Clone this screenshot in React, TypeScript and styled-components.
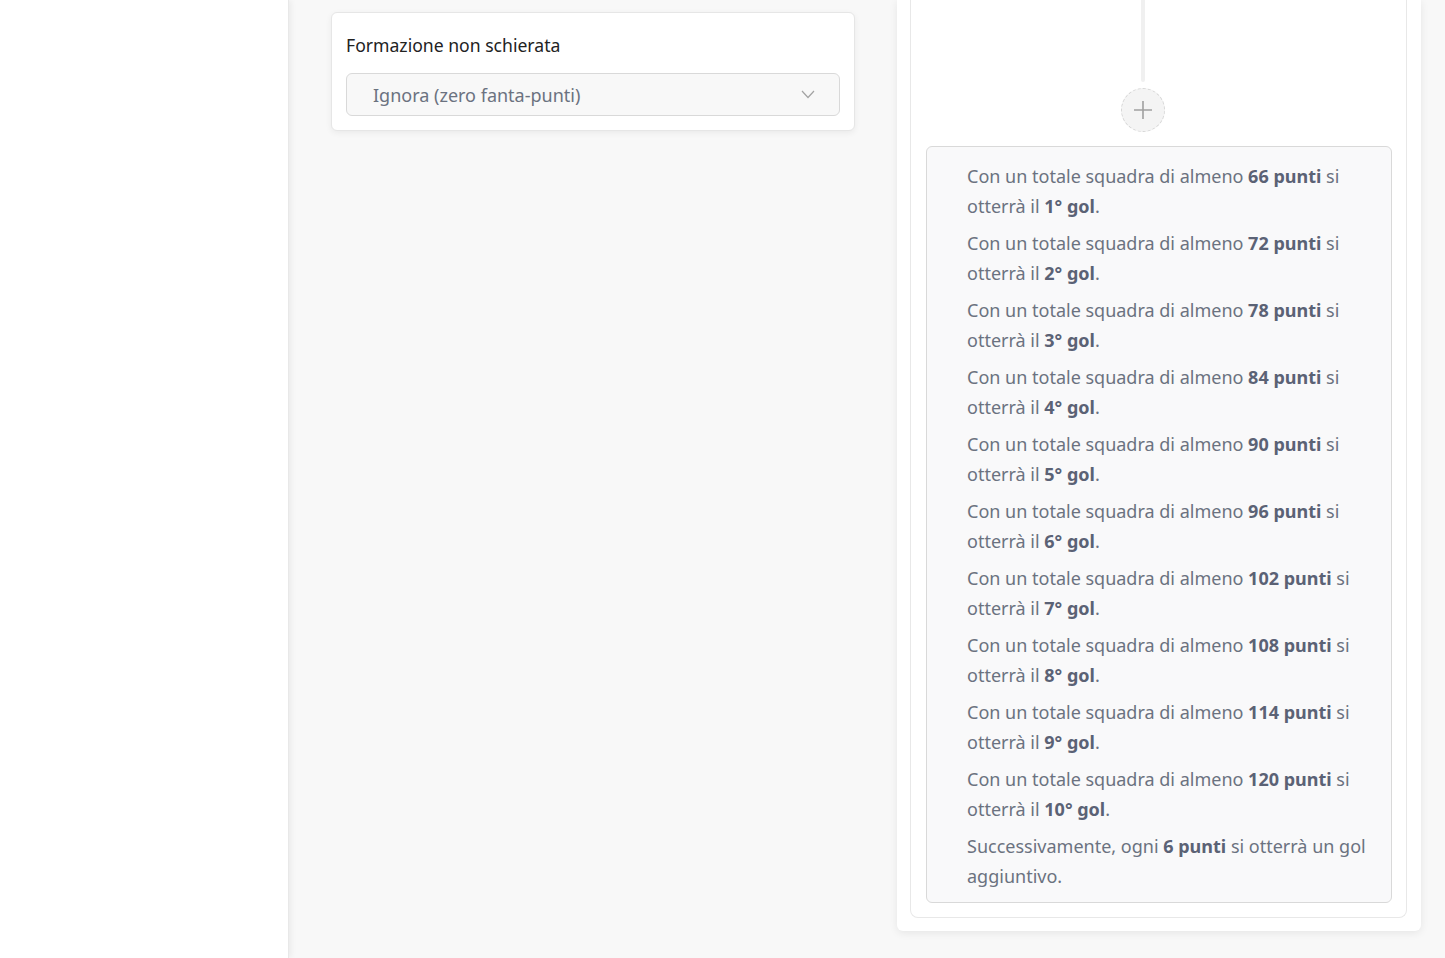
import React from 'react'
import styled, { createGlobalStyle } from 'styled-components'

const Global = createGlobalStyle`
  html, body { margin: 0; padding: 0; }
  body {
    font-family: "Noto Sans", "Open Sans", sans-serif;
    background: #f8f8f8;
    overflow: hidden;
  }
`

const Shell = styled.div`
  display: flex;
  width: 1445px;
  height: 958px;
  overflow: hidden;
`

const Sidebar = styled.aside`
  width: 288px;
  flex-shrink: 0;
  background: #fff;
  border-right: 1px solid #e8e8e8;
  box-shadow: 2px 0 6px rgba(0, 0, 0, 0.06);
  position: relative;
  z-index: 1;
`

const Main = styled.main`
  flex: 1;
  display: grid;
  grid-template-columns: 524px 524px;
  column-gap: 42px;
  align-items: start;
  padding-left: 42px;
  background: #f8f8f8;
`

const Card = styled.div`
  background: #fff;
  border: 1px solid #e6e6e6;
  border-radius: 6px;
  box-shadow: 0 2px 6px rgba(0, 0, 0, 0.06);
  margin-top: 12px;
  padding: 20px 14px 14px;
`

const Label = styled.div`
  font-size: 17.6px;
  color: #222;
  margin-bottom: 16px;
  line-height: 24px;
`

const Select = styled.div`
  height: 41px;
  display: flex;
  align-items: center;
  justify-content: space-between;
  padding: 0 24px 0 26px;
  background: #f8f8f8;
  border: 1px solid #d9d9d9;
  border-radius: 6px;
  font-size: 18px;
  color: #6b7280;
`

const RightCard = styled.div`
  background: #fff;
  border-radius: 0 0 6px 6px;
  box-shadow: 0 2px 8px rgba(0, 0, 0, 0.08);
  padding: 0 14px 13px 13px;
`

const Inner = styled.div`
  border: 1px solid #e8e8e8;
  border-top: none;
  border-radius: 0 0 8px 8px;
  padding: 0 14px 14px 15px;
  display: flex;
  flex-direction: column;
`

const Connector = styled.div`
  display: flex;
  flex-direction: column;
  align-items: center;
  padding-right: 32px;
`

const Stem = styled.div`
  width: 4px;
  height: 82px;
  background: #f0f0f0;
  border-radius: 0 0 2px 2px;
`

const AddButton = styled.button`
  width: 44px;
  height: 44px;
  margin-top: 6px;
  border-radius: 50%;
  border: 1px dashed #d6d6d6;
  background: #f4f4f4;
  display: flex;
  align-items: center;
  justify-content: center;
  padding: 0;
  cursor: pointer;
`

const Rules = styled.ul`
  list-style: none;
  margin: 14px 0 0;
  padding: 14px 16px 11px 40px;
  background: #f9f9fa;
  border: 1px solid #d9d9d9;
  border-radius: 6px;
`

const Rule = styled.li`
  font-size: 18px;
  line-height: 30px;
  color: #6b7280;
  margin-bottom: 7px;
  &:last-child { margin-bottom: 0; }
  b { color: #5b6275; font-weight: 700; }
`

const thresholds = [66, 72, 78, 84, 90, 96, 102, 108, 114, 120]

export default function App() {
  return (
    <>
      <Global />
      <Shell>
        <Sidebar />
        <Main>
          <Card>
            <Label>Formazione non schierata</Label>
            <Select>
              <span>Ignora (zero fanta-punti)</span>
              <svg width="14" height="9" viewBox="0 0 14 9" fill="none">
                <path d="M1 1l6 6.5L13 1" stroke="#a3a3a3" strokeWidth="1.2" />
              </svg>
            </Select>
          </Card>
          <RightCard>
            <Inner>
              <Connector>
                <Stem />
                <AddButton aria-label="Aggiungi">
                  <svg width="20" height="20" viewBox="0 0 20 20">
                    <path d="M10 1v18M1 10h18" stroke="#a0a0a0" strokeWidth="1.6" />
                  </svg>
                </AddButton>
              </Connector>
              <Rules>
                {thresholds.map((t, i) => (
                  <Rule key={t}>
                    Con un totale squadra di almeno <b>{t} punti</b> si otterrà il <b>{i + 1}° gol</b>.
                  </Rule>
                ))}
                <Rule>
                  Successivamente, ogni <b>6 punti</b> si otterrà un gol aggiuntivo.
                </Rule>
              </Rules>
            </Inner>
          </RightCard>
        </Main>
      </Shell>
    </>
  )
}
